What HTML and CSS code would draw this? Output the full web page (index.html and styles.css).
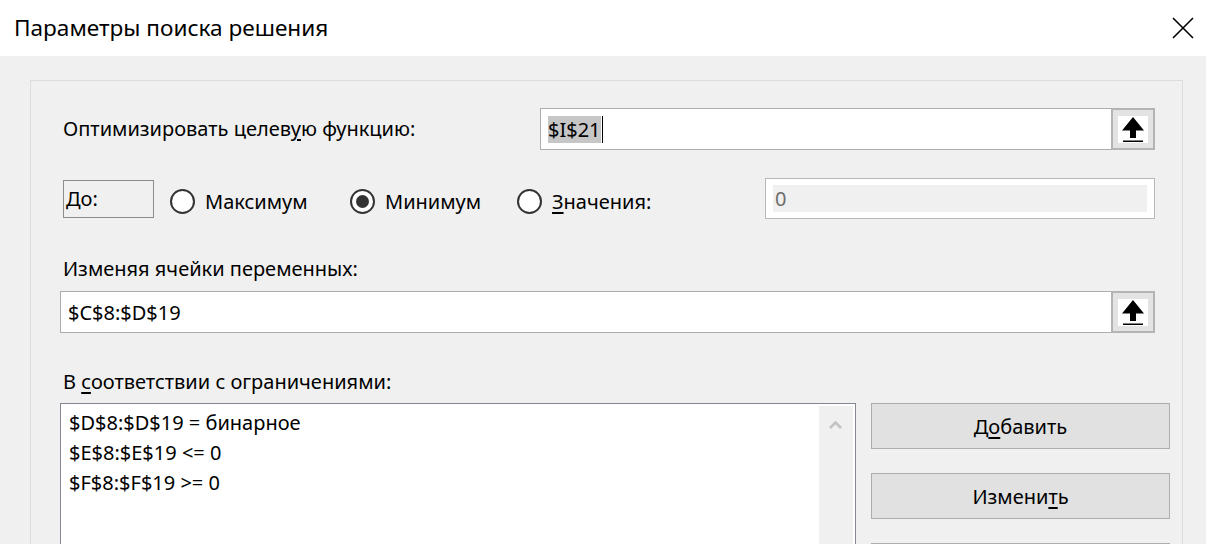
FILE: index.html
```html
<!DOCTYPE html>
<html lang="ru">
<head>
  <meta charset="UTF-8">
  <title>Параметры поиска решения</title>
  <link rel="stylesheet" href="styles.css">
</head>
<body>
  <div class="dialog">
    <div class="titlebar">
      <span class="title">Параметры поиска решения</span>
      <button class="close" type="button" aria-label="Закрыть">
        <svg width="22" height="22" viewBox="0 0 22 22">
          <path d="M1 1 L21 21 M21 1 L1 21" stroke="#000" stroke-width="1.6" fill="none"/>
        </svg>
      </button>
    </div>

    <div class="dialog-body">
      <div class="group">
        <div class="row row-target">
          <span class="caption caption-target">Оптимизировать целев<u>у</u>ю функцию:</span>
          <div class="ref-input">
            <span class="ref-text"><span class="selection">$I$21</span><span class="caret"></span></span>
            <span class="ref-btn">
              <span class="ref-icon">
                <svg width="30" height="27" viewBox="0 0 30 27">
                  <polygon points="15,1 26,14.5 18,14.5 18,22 12,22 12,14.5 4,14.5" fill="#000"/>
                  <rect x="5" y="24.5" width="20" height="1.5" fill="#000"/>
                </svg>
              </span>
            </span>
          </div>
        </div>

        <div class="row row-to">
          <div class="to-box">До:</div>
          <label class="radio radio-max"><span class="dot"></span><span>Максимум</span></label>
          <label class="radio radio-min"><span class="dot checked"></span><span>Минимум</span></label>
          <label class="radio"><span class="dot"></span><span><u>З</u>начения:</span></label>
          <div class="value-box"><div class="value-field">0</div></div>
        </div>

        <div class="caption caption-vars">Изменяя ячейки переменных:</div>
        <div class="ref-input ref-vars">
          <span class="ref-text">$C$8:$D$19</span>
          <span class="ref-btn">
            <span class="ref-icon">
              <svg width="30" height="27" viewBox="0 0 30 27">
                <polygon points="15,1 26,14.5 18,14.5 18,22 12,22 12,14.5 4,14.5" fill="#000"/>
                <rect x="5" y="24.5" width="20" height="1.5" fill="#000"/>
              </svg>
            </span>
          </span>
        </div>

        <div class="caption caption-cons">В <u>с</u>оответствии с ограничениями:</div>
        <div class="cons-row">
          <div class="listbox">
            <div class="list-items">
              <div class="list-item">$D$8:$D$19 = бинарное</div>
              <div class="list-item">$E$8:$E$19 &lt;= 0</div>
              <div class="list-item">$F$8:$F$19 &gt;= 0</div>
            </div>
            <div class="scrollbar">
              <svg width="34" height="30" viewBox="0 0 34 30">
                <polyline points="11,22 16.5,16.5 22,22" stroke="#c2c2c2" stroke-width="2.6" fill="none"/>
              </svg>
            </div>
          </div>
          <div class="side-buttons">
            <button class="btn" type="button">Д<u>о</u>бавить</button>
            <button class="btn" type="button">Измени<u>т</u>ь</button>
            <button class="btn" type="button" aria-label="Удалить"></button>
          </div>
        </div>
      </div>
    </div>
  </div>
</body>
</html>
```

FILE: styles.css
```css
body {
  margin: 0;
  width: 1206px;
  height: 544px;
  overflow: hidden;
  background-color: #f0f0f0;
  font-family: 'Noto Sans', 'Open Sans', sans-serif;
  font-size: 20px;
  color: #000;
}

u {
  text-decoration-thickness: 1.5px;
  text-underline-offset: 3px;
}

.titlebar {
  height: 56px;
  background-color: #fff;
  display: flex;
  align-items: center;
  justify-content: space-between;
  padding-left: 14px;
}

.title {
  font-size: 22.6px;
  margin-top: -2px;
}

.close {
  width: 46px;
  height: 56px;
  padding: 0;
  border: none;
  background: none;
  display: flex;
  align-items: center;
  justify-content: center;
}

.dialog-body {
  padding: 24px 23px 0 30px;
}

.group {
  border: 1px solid #dcdcdc;
  height: 520px;
  box-sizing: border-box;
  padding: 27px 12px 0 29px;
}

.row {
  display: flex;
  align-items: center;
}

.caption {
  padding-left: 3px;
  line-height: 26px;
}

.caption-target {
  width: 480px;
  box-sizing: border-box;
}

.row-target {
  height: 42px;
}

/* reference input with the collapse button */
.ref-input {
  flex: 1;
  height: 42px;
  margin-right: 15px;
  box-sizing: border-box;
  border: 1px solid #abadb3;
  background-color: #fff;
  display: flex;
  align-items: center;
}

.ref-text {
  flex: 1;
  padding-left: 7px;
  display: flex;
  align-items: center;
}

.selection {
  background-color: #c6c6c6;
  line-height: 27px;
}

.caret {
  width: 1px;
  height: 27px;
  background-color: #000;
  margin-left: 1px;
}

.ref-btn {
  width: 44px;
  height: 42px;
  margin: -1px -1px -1px 0;
  box-sizing: border-box;
  border: 2px solid #b4b4b4;
  background-color: #e3e3e3;
  display: flex;
  align-items: center;
  justify-content: center;
}

.ref-icon {
  width: 30px;
  height: 27px;
  background-color: #fff;
  display: block;
}

.ref-icon svg {
  display: block;
}

.row-to {
  margin-top: 28px;
  height: 41px;
}

.to-box {
  margin-left: 3px;
  width: 91px;
  height: 38px;
  box-sizing: border-box;
  border: 1px solid #8c8c8c;
  padding-left: 2px;
  display: flex;
  align-items: center;
}

.radio {
  display: flex;
  align-items: center;
  gap: 10px;
  margin-top: 6px;
}

.radio-max {
  margin-left: 16px;
  width: 180px;
}

.radio-min {
  width: 167px;
}

.dot {
  width: 25px;
  height: 25px;
  box-sizing: border-box;
  border: 2px solid #333;
  border-radius: 50%;
  background-color: #fff;
  display: flex;
  align-items: center;
  justify-content: center;
}

.dot.checked::after {
  content: '';
  width: 13px;
  height: 13px;
  border-radius: 50%;
  background-color: #333;
}

.value-box {
  margin-left: auto;
  margin-right: 15px;
  width: 390px;
  height: 41px;
  box-sizing: border-box;
  border: 1px solid #b8b8b8;
  background-color: #fff;
  padding: 6px 7px;
}

.value-field {
  height: 100%;
  background-color: #f0f0f0;
  color: #6d6d6d;
  padding-left: 2px;
  display: flex;
  align-items: center;
}

.caption-vars {
  margin-top: 37px;
}

.ref-vars {
  flex: none;
  margin-top: 9px;
}

.caption-cons {
  margin-top: 36px;
}

.cons-row {
  margin-top: 8px;
  display: flex;
  gap: 15px;
}

.listbox {
  width: 796px;
  height: 200px;
  box-sizing: border-box;
  border: 1px solid #828790;
  background-color: #fff;
  padding: 2px;
  display: flex;
}

.list-items {
  flex: 1;
  padding: 2px 0 0 6px;
}

.list-item {
  line-height: 30px;
}

.scrollbar {
  width: 34px;
  background-color: #f0f0f0;
}

.scrollbar svg {
  display: block;
}

.side-buttons {
  flex: 1;
  display: flex;
  flex-direction: column;
  gap: 24px;
}

.btn {
  height: 46px;
  border: 1px solid #adadad;
  background-color: #e1e1e1;
  font-family: inherit;
  font-size: 20px;
  color: #000;
  padding: 0;
}
```
